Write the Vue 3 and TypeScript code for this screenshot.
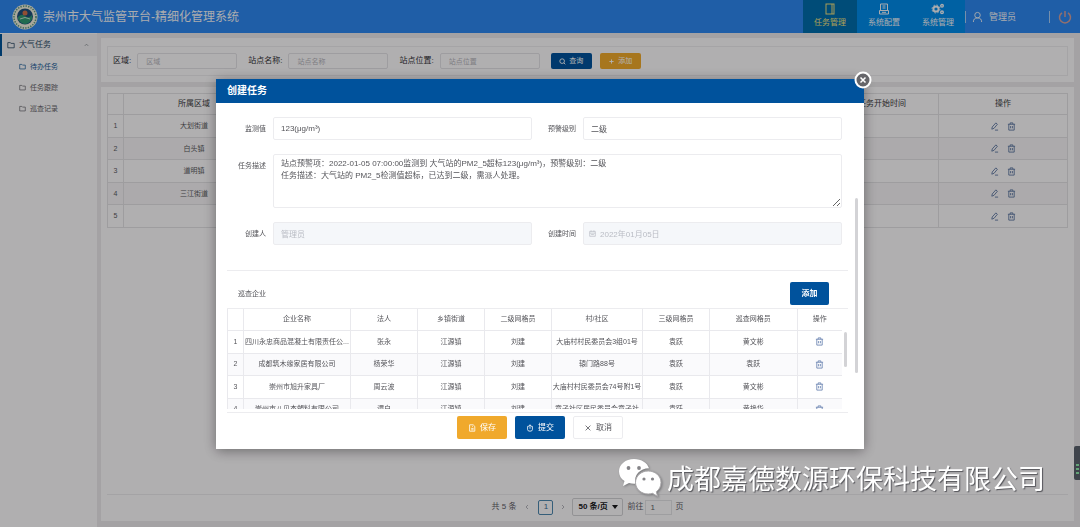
<script setup lang="ts">
import { ref } from 'vue'

interface Company {
  name: string
  owner: string
  town: string
  second: string
  village: string
  third: string
  inspector: string
}

const menu = ['待办任务', '任务跟踪', '巡查记录']
const filters = [
  { id: 'area', label: '区域:', hint: '区域' },
  { id: 'site', label: '站点名称:', hint: '站点名称' },
  { id: 'place', label: '站点位置:', hint: '站点位置' },
]
const areas = ['大划街道', '白头镇', '道明镇', '三江街道', '']
const companies: Company[] = [
  { name: '四川永忠商品混凝土有限责任公...', owner: '张永', town: '江源镇', second: '刘建', village: '大庙村村民委员会3组01号', third: '袁跃', inspector: '黄文彬' },
  { name: '成都筑木缘家居有限公司', owner: '杨荣华', town: '江源镇', second: '刘建', village: '辕门路88号', third: '袁跃', inspector: '袁跃' },
  { name: '崇州市旭升家具厂', owner: '周云波', town: '江源镇', second: '刘建', village: '大庙村村民委员会74号附1号', third: '袁跃', inspector: '黄文彬' },
  { name: '崇州市八贝杰塑料有限公司', owner: '谭白', town: '江源镇', second: '刘建', village: '章子社区居民委员会章子社', third: '袁跃', inspector: '黄艳华' },
]
const value = ref('123(μg/m³)')
const level = ref('二级')
const detail = ref(
  '站点预警项：2022-01-05 07:00:00监测到 大气站的PM2_5超标123(μg/m³)，预警级别：二级\n任务描述：大气站的 PM2_5检测值超标，已达到二级，需派人处理。',
)
const pageSize = ref('50')
const pageNo = ref('1')
</script>

<template>
  <div class="app">
    <header class="top">
      <svg class="logo" viewBox="0 0 26 26">
        <circle cx="13" cy="13" r="12.5" fill="#f3f1df" />
        <circle cx="13" cy="13" r="11" fill="none" stroke="#5d9a86" stroke-width="1.6" stroke-dasharray="1.4 1.2" />
        <circle cx="13" cy="12.5" r="8" fill="#1f4f7c" />
        <path d="M6 13q3.500-4 7-1t7-1v4q-3 5-7 5t-7-5z" fill="#2f9a72" />
        <circle cx="13" cy="9" r="2.500" fill="#d0714a" />
        <path d="M8 15q5-3 10 0" stroke="#bfe3cf" fill="none" />
      </svg>
      <h1>崇州市大气监管平台-精细化管理系统</h1>
      <nav class="tabs">
        <a href="#" class="tab active">
          <svg viewBox="0 0 12 12"><rect x="2" y="1" width="8" height="10" /><path d="M8 1v10" /></svg>
          任务管理
        </a>
        <a href="#" class="tab">
          <svg viewBox="0 0 12 12"><path d="M2.500 7V1h7v6M1.500 7.500h9V11h-9zM4.500 3h3M4.500 5h3M4 9.300h4" /></svg>
          系统配置
        </a>
        <a href="#" class="tab">
          <svg class="gears" viewBox="0 0 14 12">
            <circle cx="5" cy="6" r="2.600" stroke-width="2" /><circle cx="5" cy="6" r="4" stroke-dasharray="1.500 1.640" />
            <circle cx="11" cy="2.800" r="1.300" stroke-width="1.400" /><circle cx="11" cy="9.300" r="1.300" stroke-width="1.400" />
          </svg>
          系统管理
        </a>
      </nav>
      <div class="user">
        <svg viewBox="0 0 12 12"><circle cx="6" cy="4" r="3" /><path d="M1.500 11.500q0-4.500 4.500-4.500t4.500 4.500" /></svg>
        <span>管理员</span>
      </div>
      <button class="power" aria-label="退出">
        <svg viewBox="0 0 14 14"><path d="M4 2.800a5.500 5.500 0 1 0 6 0M7 1v6" /></svg>
      </button>
    </header>

    <div class="shell">
      <aside class="side">
        <a href="#" class="group">
          <svg class="folder" viewBox="0 0 10 9"><path d="M1 1.500h3l1 1h4v5.500h-8z" /></svg>
          <span>大气任务</span>
          <svg class="chev" viewBox="0 0 6 4"><path d="M1 3l2-2 2 2" /></svg>
        </a>
        <a v-for="(m, i) in menu" :key="m" href="#" class="item" :class="{ on: i === 0 }">
          <svg class="folder" viewBox="0 0 10 9"><path d="M1 1.500h3l1 1h4v5.500h-8z" /></svg>
          <span>{{ m }}</span>
        </a>
      </aside>

      <main class="main">
        <section class="panel search">
          <form class="filters" @submit.prevent>
            <div v-for="f in filters" :key="f.id" class="filter">
              <label :for="f.id">{{ f.label }}</label>
              <input :id="f.id" type="text" :placeholder="f.hint" />
            </div>
            <button class="small blue">
              <svg viewBox="0 0 10 10"><circle cx="4.500" cy="4.500" r="3.300" /><path d="M7 7l2 2" /></svg>查询
            </button>
            <button class="small amber" type="button">
              <svg viewBox="0 0 10 10"><path d="M5 2v6M2 5h6" /></svg>添加
            </button>
          </form>
        </section>

        <section class="panel list">
          <table class="tasks">
            <colgroup><col class="t-no" /><col class="t-area" /><col /><col class="t-time" /><col class="t-op" /></colgroup>
            <thead>
              <tr><th></th><th>所属区域</th><th></th><th>任务开始时间</th><th>操作</th></tr>
            </thead>
            <tbody>
              <tr v-for="(a, i) in areas" :key="i">
                <td>{{ i + 1 }}</td><td>{{ a }}</td><td></td><td></td>
                <td>
                  <div class="ops">
                    <button aria-label="编辑"><svg viewBox="0 0 10 10"><path d="M2 8l.5-2.500L6.500 1l1.700 1.500L4.500 7zM5.500 9H9" /></svg></button>
                    <button aria-label="删除"><svg viewBox="0 0 10 10"><path d="M1 2.500h8M3.500 2.500V1h3v1.500M2 2.500V9h6V2.500M4 4.500v2.500M6 4.500v2.500" /></svg></button>
                  </div>
                </td>
              </tr>
            </tbody>
          </table>
          <div class="pager">
            <span>共 5 条</span>
            <button class="arrow" aria-label="上一页"><svg viewBox="0 0 4 6"><path d="M3 1L1 3l2 2" /></svg></button>
            <button class="page">1</button>
            <button class="arrow" aria-label="下一页"><svg viewBox="0 0 4 6"><path d="M1 1l2 2-2 2" /></svg></button>
            <div class="size">
              <select v-model="pageSize" aria-label="每页条数"><option value="50">50 条/页</option></select>
              <svg viewBox="0 0 6 4"><path d="M0 0h6L3 4z" /></svg>
            </div>
            <label for="go">前往</label>
            <input id="go" v-model="pageNo" type="text" />
            <span>页</span>
          </div>
        </section>
      </main>
    </div>

    <div class="mask">
      <div class="dialog" role="dialog" aria-labelledby="dlg">
        <h2 id="dlg">创建任务</h2>
        <button class="close" aria-label="关闭">
          <svg viewBox="0 0 18 18"><circle cx="9" cy="9" r="7.500" /><path d="M6.500 6.500l5 5M11.500 6.500l-5 5" /></svg>
        </button>

        <div class="body">
          <form class="form" @submit.prevent>
            <label for="val">监测值</label>
            <input id="val" v-model="value" type="text" />
            <label for="lvl">预警级别</label>
            <input id="lvl" v-model="level" type="text" />
            <label class="high" for="desc">任务描述</label>
            <textarea id="desc" v-model="detail"></textarea>
            <label for="who">创建人</label>
            <input id="who" type="text" value="管理员" disabled />
            <label for="when">创建时间</label>
            <div class="date">
              <svg viewBox="0 0 10 10"><path d="M1 2h8v7H1zM1 4.500h8M3 .5v2M7 .5v2M3 6.500h4" /></svg>
              <input id="when" type="text" value="2022年01月05日" disabled />
            </div>
          </form>

          <div class="block">
            <div class="bar"><h3>巡查企业</h3><button class="add">添加</button></div>
            <div class="grid">
              <div class="clip">
                <table class="firms">
                  <colgroup>
                    <col class="c-no" /><col class="c-name" /><col class="c-mid" /><col class="c-mid" /><col class="c-mid" />
                    <col class="c-village" /><col class="c-mid" /><col /><col class="c-op" />
                  </colgroup>
                  <thead>
                    <tr>
                      <th></th><th>企业名称</th><th>法人</th><th>乡镇街道</th><th>二级网格员</th><th>村/社区</th>
                      <th>三级网格员</th><th>巡查网格员</th><th>操作</th>
                    </tr>
                  </thead>
                  <tbody>
                    <tr v-for="(c, i) in companies" :key="c.name">
                      <td>{{ i + 1 }}</td><td>{{ c.name }}</td><td>{{ c.owner }}</td><td>{{ c.town }}</td>
                      <td>{{ c.second }}</td><td>{{ c.village }}</td><td>{{ c.third }}</td><td>{{ c.inspector }}</td>
                      <td>
                        <button class="del" aria-label="删除"><svg viewBox="0 0 10 10"><path d="M1 2.500h8M3.500 2.500V1h3v1.500M2 2.500V9h6V2.500M4 4.500v2.500M6 4.500v2.500" /></svg></button>
                      </td>
                    </tr>
                  </tbody>
                </table>
              </div>
              <i class="thumb inner"></i>
            </div>
          </div>
          <i class="thumb outer"></i>
        </div>

        <footer class="foot">
          <button class="amber"><svg viewBox="0 0 10 10"><path d="M2 1h4.500L8.500 3v6H2zM4 5.500h3M4 7.300h3M5 3h1" /></svg>保存</button>
          <button class="blue"><svg viewBox="0 0 10 10"><path d="M3.500 3H2v4q0 2 3 2t3-2V3H6.500M5 6V1M3.500 2.500L5 1l1.500 1.500" /></svg>提交</button>
          <button class="plain"><svg viewBox="0 0 10 10"><path d="M2 2l6 6M8 2l-6 6" /></svg>取消</button>
        </footer>
      </div>
    </div>

    <div class="widget"><i></i><i></i><i></i></div>
    <div class="mark">
      <svg viewBox="0 0 44 40">
        <path d="M16 1C7.500 1 1 6.500 1 13.500c0 4 2 7.300 5.500 9.500L5 28l6-3q2.500.7 5 .7h1.500C15.500 17 22 10.500 31 10.300 29.500 5 23.500 1 16 1z" />
        <path d="M43 24.500c0-6.500-5.800-11.500-12.800-11.500S17.500 18 17.500 24.500 23.200 36 30.200 36q2.300 0 4.300-.7l5 3-1.200-4.500c3-2.200 4.700-5.500 4.700-9.300z" />
        <circle cx="10.500" cy="10" r="1.900" /><circle cx="21" cy="10" r="1.900" />
        <circle cx="26" cy="21" r="1.600" /><circle cx="34.500" cy="21" r="1.600" />
      </svg>
      <span>成都嘉德数源环保科技有限公司</span>
    </div>
  </div>
</template>

<style>
body { margin: 0; overflow: hidden; }
</style>

<style scoped>
.app, .app * { box-sizing: border-box; }
.app {
  position: relative;
  display: flex;
  flex-direction: column;
  height: 100vh;
  background: #ebe9eb;
  color: #4a4a4e;
  font-family: "Liberation Sans", "Noto Sans CJK SC", sans-serif;
  font-size: 8px;
  line-height: 12px;
}
button, input, textarea, select { font: inherit; color: inherit; margin: 0; }
button { border: 0; padding: 0; background: none; }
a { color: inherit; text-decoration: none; }
svg { display: block; fill: none; stroke: currentColor; flex: none; }
h1, h2, h3 { margin: 0; }

.top { display: flex; align-items: center; height: 33px; flex: none; background: #2d87ef; color: #f4f6fa; padding: 0 8px 0 12px; }
.logo { width: 26px; height: 26px; stroke: none; }
.top h1 { flex: 1; margin-left: 5px; font-size: 12px; font-weight: 400; line-height: 18px; }
.tabs { display: flex; height: 100%; }
.tab { width: 54px; display: flex; flex-direction: column; align-items: center; gap: 2px; padding-top: 3px; background: #008bea; }
.tab svg { width: 12px; height: 12px; }
.tab .gears { width: 14px; }
.tab.active { background: #006dad; color: #f2e27c; }
.user { display: flex; align-items: center; gap: 6px; width: 84px; padding-left: 6px; border-left: 1px solid #a9cdf5; height: 12px; font-size: 9px; }
.user svg { width: 11px; height: 12px; }
.power { height: 12px; padding-left: 8px; border-left: 1px solid #a9cdf5; color: #d3a09c; }
.power svg { width: 14px; height: 14px; stroke-width: 1.5; margin-top: -1px; }

.shell { flex: 1; display: flex; min-height: 0; }
.side { width: 97px; flex: none; background: #fdfbfd; padding-top: 1px; }
.group, .item { display: flex; align-items: center; height: 21px; }
.group { height: 22px; padding: 0 8px 0 5px; border-left: 2px solid #00549a; background: #f1f0f2; color: #2c4966; }
.group span { flex: 1; margin-left: 4px; }
.folder { width: 8px; height: 8px; }
.chev { width: 5px; height: 4px; stroke: #8c9096; }
.item { padding-left: 19px; gap: 4px; font-size: 7px; color: #66666b; }
.item .folder { width: 7px; height: 7px; }
.item.on { color: #175b98; }

.main { flex: 1; min-width: 0; display: flex; flex-direction: column; gap: 5px; padding: 5px 6px 6px 4px; }
.panel { background: #fdfbfd; padding: 6px; }
.search { padding: 8px 6px 6px; }
.filters { display: flex; align-items: center; height: 30px; border: 1px solid #ecebee; padding-left: 5px; }
.filter { display: flex; align-items: center; justify-content: space-between; margin-right: 11px; gap: 6px; color: #303034; }
.filter input { width: 100px; height: 16px; border: 1px solid #e2e1e5; border-radius: 2px; background: none; padding: 0 8px; font-size: 7px; }
.filter input::placeholder { color: #b5b4ba; }
.small { display: flex; align-items: center; justify-content: center; gap: 3px; width: 41px; height: 16px; border-radius: 2px; color: #fff; font-size: 7px; margin-right: 8px; }
.small svg { width: 7px; height: 7px; stroke-width: 1.3; }
.blue { background: #00529c; color: #fff; }
.amber { background: #f0a92c; color: #fff; }

.list { flex: 1; display: flex; flex-direction: column; justify-content: space-between; padding-bottom: 2px; }
table { border-collapse: collapse; table-layout: fixed; width: 100%; }
th, td { padding: 0; text-align: center; font-weight: 400; }
.tasks th, .tasks td { border: 1px solid #e2e1e4; }
.tasks th { height: 21px; font-size: 8px; color: #3b3b40; }
.tasks td { height: 22px; font-size: 7px; color: #5a5a60; }
.tasks tbody tr:nth-child(odd) td { height: 23px; }
.tasks tbody tr:nth-child(even) td { background: #f6f4f6; }
.t-no { width: 16px; }
.t-area { width: 141px; }
.t-time { width: 113px; }
.t-op { width: 129px; }
.ops { display: flex; justify-content: center; gap: 8px; color: #5f78a3; }
.ops svg { width: 9px; height: 9px; }
.pager { display: flex; align-items: center; justify-content: center; height: 25px; border-top: 1px solid #ebeaed; color: #606066; }
.arrow { width: 22px; display: flex; justify-content: center; color: #b4b4ba; }
.page + .arrow { width: 19px; }
.arrow svg { width: 4px; height: 6px; }
.page { width: 15px; height: 15px; border: 1px solid #4d87ae; border-radius: 2px; color: #3a6a92; }
.arrow + .size { margin-right: 4px; }
.size { position: relative; }
.size select { width: 51px; height: 18px; appearance: none; border: 1px solid #d2d1d5; border-radius: 2px; background: none; padding: 0 0 0 5px; font-weight: 700; color: #17171a; }
.size svg { position: absolute; right: 5px; top: 7px; width: 6px; height: 4px; fill: #17171a; stroke: none; }
.pager input { width: 27px; height: 15px; margin: 0 3px 0 2px; padding: 0 4px; border: 1px solid #e3e2e6; background: none; }

.mask { position: fixed; inset: 0; display: flex; justify-content: center; align-items: flex-start; padding-top: 15vh; background: rgba(0, 0, 0, 0.3); }
.dialog { position: relative; width: 60%; background: #fff; box-shadow: 0 2px 12px rgba(0, 0, 0, 0.4); color: #55555a; }
.dialog h2 { height: 24px; padding-left: 11px; background: #00529c; color: #fff; font-size: 10px; line-height: 24px; }
.close { position: absolute; top: -8px; right: -8px; }
.close svg { width: 18px; height: 18px; stroke: #fff; stroke-width: 2; fill: #66666a; }
.close path { stroke-width: 1.5; }
.body { position: relative; padding: 14px 16px 0 11px; }
.form { display: grid; grid-template-columns: 51px 1fr 51px 1fr; align-items: center; row-gap: 14px; padding-right: 6px; margin-left: -5px; }
.form label { font-size: 7px; text-align: right; padding-right: 7px; }
.form input, .form textarea { width: 100%; border: 1px solid #ececef; border-radius: 2px; padding: 0 7px; background: #fff; }
.form input { height: 23px; }
.form input:disabled { background: #f5f7fa; color: #b9bcc4; }
.form textarea { grid-column: 2 / 5; display: block; height: 54px; padding-top: 3px; resize: vertical; }
.form .high { align-self: start; padding-top: 6px; }
.form .date { position: relative; color: #b9bcc4; }
.date svg { position: absolute; left: 6px; top: 8px; width: 7px; height: 7px; }
.form .date input { padding-left: 16px; }
.block { margin-top: 25px; border-top: 1px solid #ececef; padding-top: 11px; }
.bar { display: flex; align-items: center; justify-content: space-between; padding: 0 19px 0 11px; margin-bottom: 3px; }
.bar h3 { font-size: 7px; font-weight: 400; }
.add { width: 39px; height: 23px; border-radius: 2px; background: #00529c; color: #fff; font-weight: 700; }
.grid { position: relative; border: 1px solid #ececef; border-width: 1px 0; padding-bottom: 3px; }
.clip { height: 100px; overflow: hidden; padding-right: 6px; }
.firms { font-size: 7px; }
.firms th, .firms td { border: 1px solid #e9e9ed; border-top: 0; white-space: nowrap; overflow: hidden; text-overflow: ellipsis; }
.firms th:last-child, .firms td:last-child { border-right: 0; }
.firms th { height: 21px; }
.firms td { height: 23px; }
.firms tbody tr:nth-child(even) td { height: 22px; background: #fafafc; }
.c-no { width: 16px; }
.c-name { width: 107px; }
.c-mid { width: 67px; }
.c-village { width: 91px; }
.c-op { width: 45px; }
.del { display: block; margin: 0 auto; color: #7189b4; }
.del svg { width: 9px; height: 9px; }
.thumb { position: absolute; width: 3px; border-radius: 2px; background: #d3d3d6; }
.inner { right: 1px; top: 23px; height: 35px; }
.outer { right: 6px; top: 95px; height: 175px; }
.foot { display: flex; justify-content: center; gap: 8px; padding: 3px 0 10px; }
.foot button { display: flex; align-items: center; justify-content: center; gap: 4px; width: 50px; height: 23px; border-radius: 2px; }
.foot svg { width: 8px; height: 8px; }
.foot .plain { border: 1px solid #ececef; }

.widget { position: absolute; right: 0; top: 446px; width: 6px; height: 34px; border-radius: 2px 0 0 2px; background: #3f444c; padding: 18px 0 0 2px; }
.widget i { display: block; width: 3px; height: 2px; margin-bottom: 2px; background: #63a377; }
.mark { position: absolute; right: 35px; bottom: 29px; display: flex; align-items: center; gap: 5px; color: #fff; font-family: "Noto Sans CJK SC", sans-serif; font-size: 27px; line-height: 40px; text-shadow: 1px 1px 1px #55555a; }
.mark span { font-weight: 400; white-space: nowrap; }
.mark svg { width: 44px; height: 40px; stroke: none; filter: drop-shadow(1px 1px 1px #77777a); }
.mark path { fill: #fff; }
.mark path + path { stroke: #aaa8aa; stroke-width: 1; }
.mark circle { fill: #858488; }
</style>
